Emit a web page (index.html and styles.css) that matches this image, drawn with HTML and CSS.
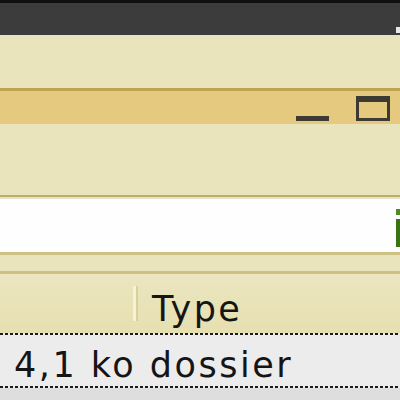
FILE: index.html
```html
<!DOCTYPE html>
<html lang="fr">
  <head>
    <meta charset="UTF-8" />
    <title>Dossier</title>
    <link rel="stylesheet" href="styles.css">
  </head>
  <body>
    <div class="topbar">
      <span class="tray"></span>
    </div>
    <div class="toolbar"></div>

    <div class="window-title">
      <span class="btn-min"></span>
      <span class="btn-max"></span>
    </div>

    <div class="location-area"></div>

    <div class="entry">
      <span class="entry-icon"></span>
    </div>

    <div class="spacer"></div>

    <div class="list">
      <div class="list-header">
        <span class="col-sep"></span>
        <span class="col-title">Type</span>
      </div>
      <div class="list-row">4,1 ko dossier</div>
      <div class="list-rest"></div>
    </div>
  </body>
</html>
```

FILE: styles.css
```css
html, body {
  margin: 0;
  padding: 0;
  width: 400px;
  height: 400px;
  overflow: hidden;
  background: #e9e4bc;
  font-family: "DejaVu Sans", sans-serif;
}
.topbar {
  height: 32px;
  border-top: 3px solid #101010;
  background: #3c3c3c;
  display: flex;
  justify-content: flex-end;
  align-items: flex-end;
}
.tray {
  width: 4px;
  height: 6px;
  margin-bottom: 2px;
  background: #e8e8e8;
}
.toolbar {
  height: 53px;
  background: #e9e4bc;
}
.window-title {
  height: 30px;
  border-top: 3px solid #bfa34e;
  background: #e5c97e;
  display: flex;
  justify-content: flex-end;
  align-items: flex-end;
  gap: 27px;
  padding-right: 10px;
  padding-bottom: 3px;
}
.btn-min {
  width: 33px;
  height: 5px;
  background: #3c3a33;
}
.btn-max {
  width: 28px;
  height: 16px;
  border: 3px solid #3c3a33;
  border-top-width: 6px;
}
.location-area {
  height: 71px;
  background: #e9e4bc;
}
.entry {
  height: 55px;
  border-top: 2px solid #bdae69;
  box-shadow: inset 0 2px 0 #e6e1c8;
  border-bottom: 3px solid #cdc284;
  background: #fefefe;
  display: flex;
  flex-direction: column;
  align-items: flex-end;
}
.entry-icon {
  width: 4px;
  height: 6px;
  margin-top: 12px;
  background: #4f8a22;
}
.entry-icon::after {
  content: "";
  display: block;
  width: 4px;
  height: 28px;
  margin-top: 10px;
  background: #3a7411;
}
.spacer {
  height: 16px;
  border-bottom: 3px solid #cdc284;
}
.list-header {
  height: 59px;
  background: linear-gradient(#ebe6c0, #e6dfb0);
  display: flex;
  align-items: center;
  font-size: 35px;
  letter-spacing: 2.5px;
  color: #151515;
}
.col-sep {
  width: 3px;
  height: 35px;
  margin-left: 133px;
  margin-right: 14px;
  background: #f6f2d8;
  border-right: 2px solid #d9d09c;
}
.col-title {
  line-height: 1;
  margin-top: 12px;
}
.list-row {
  height: 46px;
  padding-top: 5px;
  background: #ececec;
  font-size: 35px;
  letter-spacing: 2.5px;
  color: #151515;
  padding-left: 14px;
  line-height: 51px;
  border-top: 2px solid transparent;
  border-bottom: 2px solid transparent;
  border-image: repeating-linear-gradient(90deg, #1a1a1a 0 3px, transparent 3px 5px) 2 0;
}
.list-rest {
  height: 20px;
  background: #dedede;
}
```
